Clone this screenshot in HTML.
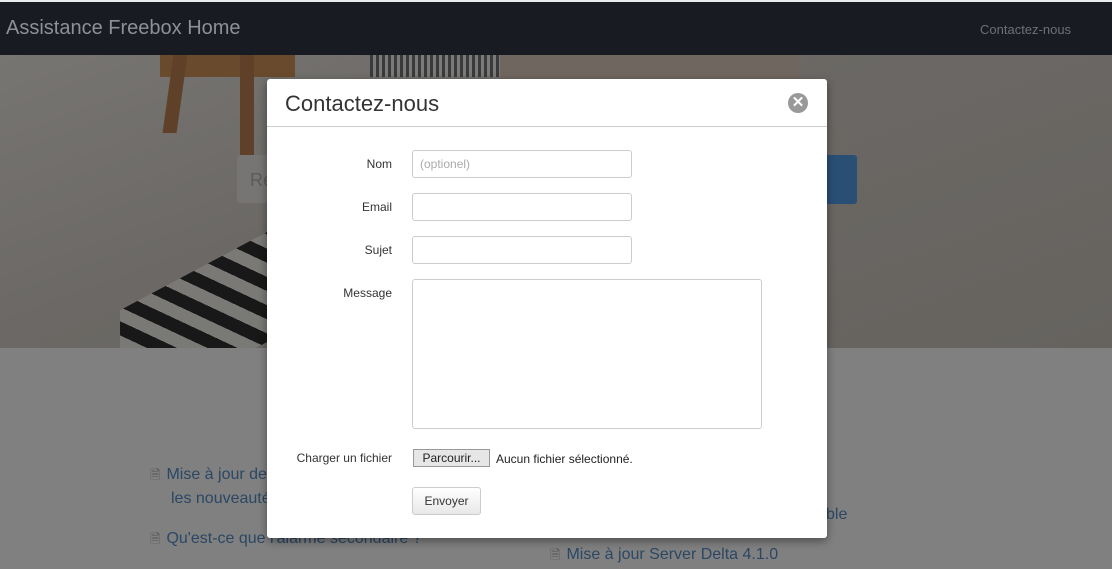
<!DOCTYPE html>
<html><head><meta charset="utf-8"><style>
*{box-sizing:border-box;margin:0;padding:0}
body{width:1112px;height:569px;overflow:hidden;font-family:"Liberation Sans",Arial,sans-serif;background:#808080;position:relative}
.abs{position:absolute}
.nav{left:0;top:2px;width:1112px;height:53px;background:#181b22}
.top{left:0;top:0;width:1112px;height:2px;background:#e8eaee}
.hero{left:0;top:55px;width:1112px;height:293px;background:linear-gradient(160deg,#777572 0%,#6b6865 40%,#66635f 100%);overflow:hidden}
.link{color:#2b4764;font-size:16px}
.ic{font-size:13px;color:#555;margin-right:6px}
.lab{font-size:12px;color:#333;text-align:right;width:120px;left:272px}
.inp{border:1px solid #ccc;border-radius:3px;background:#fff}
</style></head><body>
<div class="abs top"></div>
<div class="abs nav"></div>
<div class="abs" style="left:6px;top:17px;color:#8d9096;font-size:20px">Assistance Freebox Home</div>
<div class="abs" style="left:980px;top:22px;color:#6d7076;font-size:13px">Contactez-nous</div>
<div class="abs hero">
  <div class="abs" style="left:160px;top:0;width:135px;height:22px;background:#6a4a2c"></div>
  <div class="abs" style="left:168px;top:0;width:14px;height:78px;background:#5e4128;transform:skewX(-8deg)"></div>
  <div class="abs" style="left:240px;top:0;width:14px;height:100px;background:#5e4128"></div>
  <div class="abs" style="left:370px;top:0;width:130px;height:22px;background:repeating-linear-gradient(90deg,#3a3a3a 0 3px,#7a7a7a 3px 6px)"></div>
  <div class="abs" style="left:500px;top:0;width:300px;height:40px;background:#6f665f"></div>
  <div class="abs" style="left:120px;top:210px;width:170px;height:110px;background:repeating-linear-gradient(45deg,#0a0a0a 0 10px,#7c7c78 10px 20px);transform:skewY(-28deg);opacity:.85"></div>
  <div class="abs" style="left:237px;top:100px;width:40px;height:48px;background:#767573;border-radius:3px"></div>
  <div class="abs" style="left:250px;top:115px;color:#5c5b59;font-size:18px">Re</div>
  <div class="abs" style="left:800px;top:100px;width:57px;height:49px;background:#2a4f75;border-radius:3px"></div>
</div>
<div class="abs link" style="left:150px;top:466px"><span class="ic">🗎</span>Mise à jour de</div>
<div class="abs link" style="left:171px;top:490px">les nouveauté</div>
<div class="abs link" style="left:150px;top:530px"><span class="ic">🗎</span>Qu'est-ce que l'alarme secondaire ?</div>
<div class="abs link" style="left:826px;top:506px">ble</div>
<div class="abs link" style="left:550px;top:546px"><span class="ic">🗎</span>Mise à jour Server Delta 4.1.0</div>

<div class="abs" style="left:267px;top:79px;width:560px;height:459px;background:#fff;border-radius:3px;box-shadow:0 3px 9px rgba(0,0,0,.4)">
  <div class="abs" style="left:18px;top:12px;font-size:22px;color:#333">Contactez-nous</div>
  <div class="abs" style="left:521px;top:14px;width:20px;height:20px;border-radius:50%;background:#999;color:#fff;font-size:15px;font-weight:bold;text-align:center;line-height:20px">✕</div>
  <div class="abs" style="left:0;top:47px;width:560px;height:1px;background:#ccc"></div>
</div>
<div class="abs lab" style="top:157px">Nom</div>
<div class="abs inp" style="left:412px;top:150px;width:220px;height:28px;padding:6px 7px;font-size:12px;color:#aaa">(optionel)</div>
<div class="abs lab" style="top:200px">Email</div>
<div class="abs inp" style="left:412px;top:193px;width:220px;height:28px"></div>
<div class="abs lab" style="top:243px">Sujet</div>
<div class="abs inp" style="left:412px;top:236px;width:220px;height:28px"></div>
<div class="abs lab" style="top:286px">Message</div>
<div class="abs inp" style="left:412px;top:279px;width:350px;height:150px"></div>
<div class="abs lab" style="top:451px">Charger un fichier</div>
<div class="abs" style="left:413px;top:449px;width:77px;height:18px;border:1px solid #999;background:#e6e6e6;font-size:12px;text-align:center;line-height:16px;color:#222">Parcourir...</div>
<div class="abs" style="left:496px;top:452px;font-size:12px;color:#222">Aucun fichier sélectionné.</div>
<div class="abs" style="left:412px;top:487px;width:69px;height:28px;border:1px solid #ccc;border-radius:3px;background:linear-gradient(#fff,#e8e8e8);font-size:12px;text-align:center;line-height:26px;color:#333">Envoyer</div>
</body></html>
